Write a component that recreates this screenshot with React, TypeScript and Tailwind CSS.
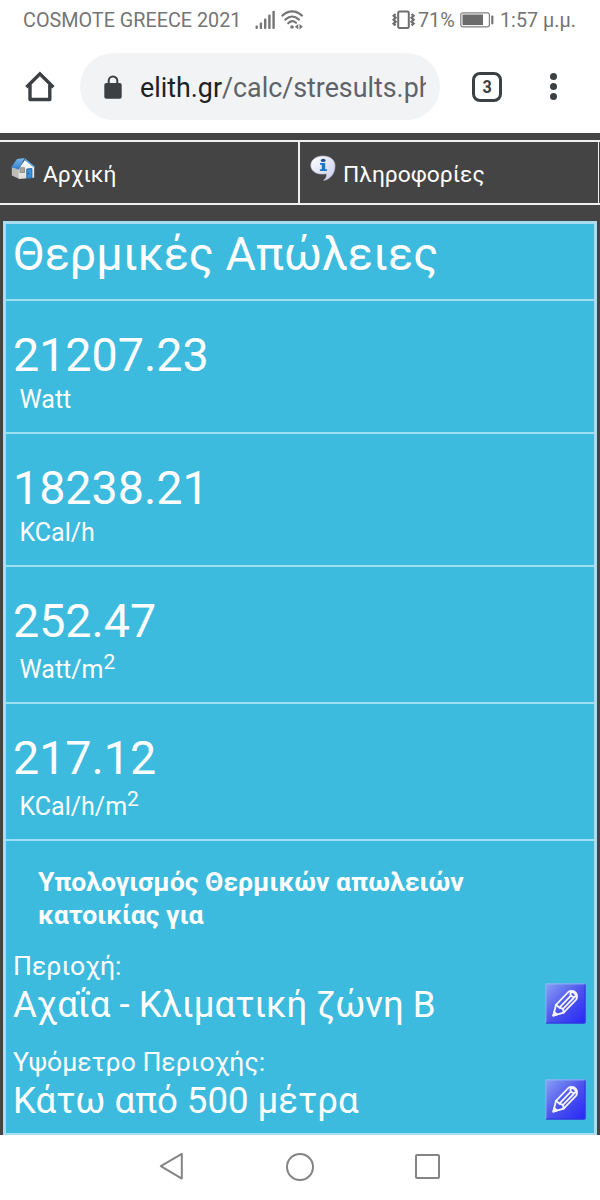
import React from 'react';

type Result = {
  value: string;
  unit: string;
  squared?: boolean;
};

const results: Result[] = [
  { value: '21207.23', unit: 'Watt' },
  { value: '18238.21', unit: 'KCal/h' },
  { value: '252.47', unit: 'Watt/m', squared: true },
  { value: '217.12', unit: 'KCal/h/m', squared: true },
];

const fields = [
  { label: 'Περιοχή:', value: 'Αχαΐα - Κλιματική ζώνη Β' },
  { label: 'Υψόμετρο Περιοχής:', value: 'Κάτω από 500 μέτρα' },
];

const SignalIcon = () => (
  <svg width="21" height="20" viewBox="0 0 21 20" fill="#757575">
    <rect x="0.5" y="15.5" width="2.4" height="3.5" rx="1" />
    <rect x="4.7" y="12.5" width="2.4" height="6.5" rx="1" />
    <rect x="9" y="8.5" width="2.4" height="10.5" rx="1" />
    <rect x="13.2" y="4.5" width="2.4" height="14.5" rx="1" />
    <rect x="17.4" y="0.7" width="2.4" height="18.3" rx="1" />
  </svg>
);

const WifiIcon = () => (
  <svg width="23" height="20" viewBox="0 0 23 20" fill="none" stroke="#757575" strokeWidth="2.1" strokeLinecap="round">
    <path d="M1.3 5.6 Q11.2 -2.8 21 5.6" />
    <path d="M4.3 9.6 Q11.2 3.4 18 9.6" />
    <path d="M7.2 13.2 Q11.2 9.4 15 12.8" />
    <circle cx="11" cy="17" r="1.8" fill="#757575" stroke="none" />
    <path d="M17.3 14v5.6l-3.4-2.8z M18.5 14v5.6l3.4-2.8z" fill="#757575" stroke="none" />
  </svg>
);

const VibrateIcon = () => (
  <svg width="25" height="20" viewBox="0 0 25 20" fill="none" stroke="#6f6f6f">
    <rect x="6.2" y="1.5" width="10.6" height="16.4" rx="1.5" strokeWidth="2" />
    <path d="M3.6 4l-2 1.8 2 2-2 2 2 2-2 1.8 2 1.8M19.6 4l2 1.8-2 2 2 2-2 2 2 1.8-2 1.8" strokeWidth="2.3" />
  </svg>
);

const BatteryIcon = () => (
  <svg width="34" height="16" viewBox="0 0 34 16" fill="none">
    <rect x="0.8" y="0.8" width="28.6" height="14" rx="2" stroke="#808080" strokeWidth="1.2" />
    <rect x="2.5" y="2.5" width="20.5" height="10.6" fill="#6b6b6b" />
    <rect x="31.2" y="3.4" width="2.2" height="9" rx="0.8" fill="#757575" />
  </svg>
);

const HomeIcon = () => (
  <svg width="30" height="31" viewBox="0 0 30 31" fill="none" stroke="#3c4043" strokeWidth="3.4" strokeLinejoin="round">
    <path d="M1.4 16.3 L14.9 2.8 L28.4 16.3" strokeLinejoin="miter" />
    <path d="M5 13.5 V28.5 H24.8 V13.5" />
  </svg>
);

const LockIcon = () => (
  <svg width="18" height="24" viewBox="0 0 18 24">
    <path d="M4.7 9 V5.8 a4.3 4.3 0 0 1 8.6 0 V9" fill="none" stroke="#3c4043" strokeWidth="2" />
    <rect x="0.3" y="8" width="17.4" height="15.8" rx="2" fill="#3c4043" />
  </svg>
);

const HouseIcon = () => (
  <svg width="25" height="24" viewBox="0 0 25 24">
    <defs>
      <linearGradient id="roof" x1="0" y1="0" x2="0" y2="1">
        <stop offset="0" stopColor="#78b9ee" />
        <stop offset="1" stopColor="#2c79cb" />
      </linearGradient>
      <linearGradient id="wall" x1="0" y1="0" x2="0" y2="1">
        <stop offset="0" stopColor="#ffffff" />
        <stop offset="1" stopColor="#dcdcda" />
      </linearGradient>
    </defs>
    <path d="M0.8 10.5 L8 11.5 V21.8 L0.8 18.5z" fill="#bdbcb8" />
    <path d="M7.5 12 L14 3 L23.2 10.5 V20.8 L7.8 22z" fill="url(#wall)" />
    <path d="M0 10.6 L6 2 L13.6 1 L7.8 12.8 Q4 11 0 10.6z" fill="url(#roof)" />
    <path d="M13.6 1 L24.2 9.8 L23.4 10.8 L13.9 3.6z" fill="#5fa5e4" />
    <rect x="9" y="10.8" width="4.4" height="4.6" fill="#aaa7a1" stroke="#85827c" strokeWidth="0.8" />
    <path d="M15.8 12 L20.9 11.6 V21 L15.8 21.4z" fill="#3c92da" stroke="#1d62a8" strokeWidth="0.9" />
    <circle cx="17.4" cy="16.6" r="0.7" fill="#153e68" />
  </svg>
);

const InfoIcon = () => (
  <svg width="27" height="27" viewBox="0 0 27 27">
    <defs>
      <linearGradient id="bubble" x1="0" y1="0" x2="1" y2="1">
        <stop offset="0" stopColor="#ffffff" />
        <stop offset="1" stopColor="#c9cbec" />
      </linearGradient>
    </defs>
    <path
      d="M13 1 C20 1 25 5 25 10.6 C25 18 21 24.3 13.6 25.4 C16.5 23 17 20.5 16.3 18.8 C7 20.2 0.8 16.4 0.8 10.3 C0.8 5 6 1 13 1z"
      fill="url(#bubble)"
      stroke="#bfc2df"
      strokeWidth="0.6"
    />
    <ellipse cx="13.2" cy="5.4" rx="2.4" ry="1.7" fill="#254f94" />
    <path d="M10 8 H15.2 V14.2 H17 V16 H9.9 V14.2 H11.8 V9.8 H10z" fill="#1878c9" />
  </svg>
);

const EditIcon = () => (
  <svg width="41" height="41" viewBox="0 0 41 41" className="shrink-0">
    <defs>
      <linearGradient id="edit" x1="0" y1="0" x2="1" y2="1">
        <stop offset="0" stopColor="#8aa4f6" />
        <stop offset="0.5" stopColor="#4d55ec" />
        <stop offset="1" stopColor="#2626fa" />
      </linearGradient>
    </defs>
    <rect x="0.5" y="0.5" width="40" height="40" rx="1.5" fill="url(#edit)" />
    <path d="M0.9 40 V0.9 H40" fill="none" stroke="#8fb8f6" strokeWidth="1" />
    <path d="M40 1.5 V40 H1" fill="none" stroke="#3037d6" strokeWidth="1" />
    <g fill="none" stroke="#f6f4ff" strokeWidth="1.8" strokeLinejoin="round" strokeLinecap="round">
      <path d="M8.3 32.6 L11 21.8 L23.3 9 Q26 6.8 29.6 8.6 Q33.4 11.6 31.4 16.4 L18.6 29.6z" />
      <path d="M11 21.8 L14.4 24.6 L18 25.8 L18.6 29.6" />
      <path d="M14.4 24.6 L25.4 13.2 M18 25.8 L28.6 15" />
      <ellipse cx="28" cy="11.6" rx="2.9" ry="2" transform="rotate(42 28 11.6)" />
      <path d="M8.3 32.6 L9.2 29 L12 31.4z" fill="#f6f4ff" />
    </g>
  </svg>
);

const StatusBar = () => (
  <div className="flex h-10 items-center pl-[23px] pr-6 text-[19.8px] leading-[24px] text-[#757575]">
    <span className="mt-[2px] w-[232px] whitespace-nowrap">COSMOTE GREECE 2021</span>
    <div className="flex gap-[5px]">
      <SignalIcon />
      <WifiIcon />
    </div>
    <div className="ml-auto flex items-center">
      <VibrateIcon />
      <span className="ml-[1px] mt-[2px] w-[42px] whitespace-nowrap">71%</span>
      <BatteryIcon />
      <span className="ml-[6px] mt-[2px] w-[76px] whitespace-nowrap">1:57 μ.μ.</span>
    </div>
  </div>
);

const AddressBar = () => (
  <div className="flex h-[93px] items-center pl-[25px]">
    <HomeIcon />
    <div className="ml-[25px] flex h-[67px] w-[360px] items-center rounded-full bg-[#f1f3f4] pl-6">
      <LockIcon />
      <div className="ml-[18px] mt-[2px] w-[286px] overflow-hidden whitespace-nowrap text-[26.8px] leading-[36px] text-[#5f6368]">
        <span className="text-[#202124]">elith.gr</span>/calc/stresults.php
      </div>
    </div>
    <div className="ml-8 flex h-[30px] w-[30px] items-center justify-center rounded-[8px] border-3 border-[#3c4043] text-[18px] font-bold leading-none text-[#3c4043]">
      <span className="scale-x-90 scale-y-105">3</span>
    </div>
    <div className="ml-12 flex flex-col gap-[3px]">
      <span className="h-[7px] w-[7px] rounded-full bg-[#3c4043]" />
      <span className="h-[7px] w-[7px] rounded-full bg-[#3c4043]" />
      <span className="h-[7px] w-[7px] rounded-full bg-[#3c4043]" />
    </div>
  </div>
);

const SiteMenu = () => (
  <div className="flex h-[65px] border-y-2 border-[#f0f0f0] text-[22.8px] leading-[32px]">
    <a className="flex w-[300px] border-r-2 border-[#f0f0f0] pl-[11px]">
      <span className="mt-[15px]">
        <HouseIcon />
      </span>
      <span className="ml-[7px] mt-[17px] whitespace-nowrap">Αρχική</span>
    </a>
    <a className="flex w-[299px] border-r border-[#f0f0f0] pl-[10px]">
      <span className="mt-[13px]">
        <InfoIcon />
      </span>
      <span className="ml-[6px] mt-[17px] whitespace-nowrap">Πληροφορίες</span>
    </a>
  </div>
);

const ResultRow = ({ value, unit, squared }: Result) => (
  <div
    className={
      squared
        ? 'h-[137px] border-b-2 border-[#9edff1] pl-[7px] pt-[26px]'
        : 'h-[133px] border-b-2 border-[#9edff1] pl-[7px] pt-[26px]'
    }
  >
    <p className="text-[46.6px] leading-[56px]">{value}</p>
    <p className={squared ? 'mt-1 pl-[6.5px] text-[25px] leading-[33px]' : 'pl-[6.5px] text-[25px] leading-[33px]'}>
      {unit}
      {squared && <sup className="top-[-0.45em] text-[21px]">2</sup>}
    </p>
  </div>
);

const NavigationBar = () => (
  <div className="flex h-[65px] items-center justify-between bg-white pb-[2px] pl-[159px] pr-[160px]">
    <svg width="25" height="29" viewBox="0 0 25 29" fill="none" stroke="#848484" strokeWidth="2">
      <path d="M1.8 14.2 L22.8 1.8 V26.6z" strokeLinejoin="round" />
    </svg>
    <span className="h-7 w-7 rounded-full border-2 border-[#848484]" />
    <span className="h-[25px] w-[25px] rounded-[2px] border-2 border-[#848484]" />
  </div>
);

const App = () => {
  return (
    <div className="flex h-[1200px] w-[600px] flex-col overflow-hidden bg-white font-['Roboto','Noto_Sans',sans-serif]">
      <StatusBar />
      <AddressBar />
      <main className="h-[1002px] bg-[#444444] pt-[7px] text-white">
        <SiteMenu />
        <div className="mx-[3px] mt-4 h-[914px] border-x-3 border-b-2 border-t-3 border-[#a9dcf0] bg-[#3cbbde]">
          <h1 className="h-[77px] whitespace-nowrap border-b-2 border-[#9edff1] pl-[7px] text-[46.6px] leading-[60px]">
            Θερμικές Απώλειες
          </h1>
          {results.map((item) => (
            <ResultRow key={item.unit} {...item} />
          ))}
          <h2 className="w-[520px] pl-8 pt-6 text-[26.6px] font-bold leading-[33px]">
            Υπολογισμός Θερμικών απωλειών
            <br />
            κατοικίας για
          </h2>
          <div className="mt-[18px] flex flex-col gap-[17px] pl-[7px] pr-2">
            {fields.map((field) => (
              <div key={field.label} className="flex h-[79px] items-end justify-between">
                <div className="h-[79px] whitespace-nowrap">
                  <p className="text-[26.6px] leading-[34px]">{field.label}</p>
                  <p className="text-[36.6px] leading-[44px]">{field.value}</p>
                </div>
                <div className="pb-1">
                  <EditIcon />
                </div>
              </div>
            ))}
          </div>
        </div>
      </main>
      <NavigationBar />
    </div>
  );
};

export default App;
